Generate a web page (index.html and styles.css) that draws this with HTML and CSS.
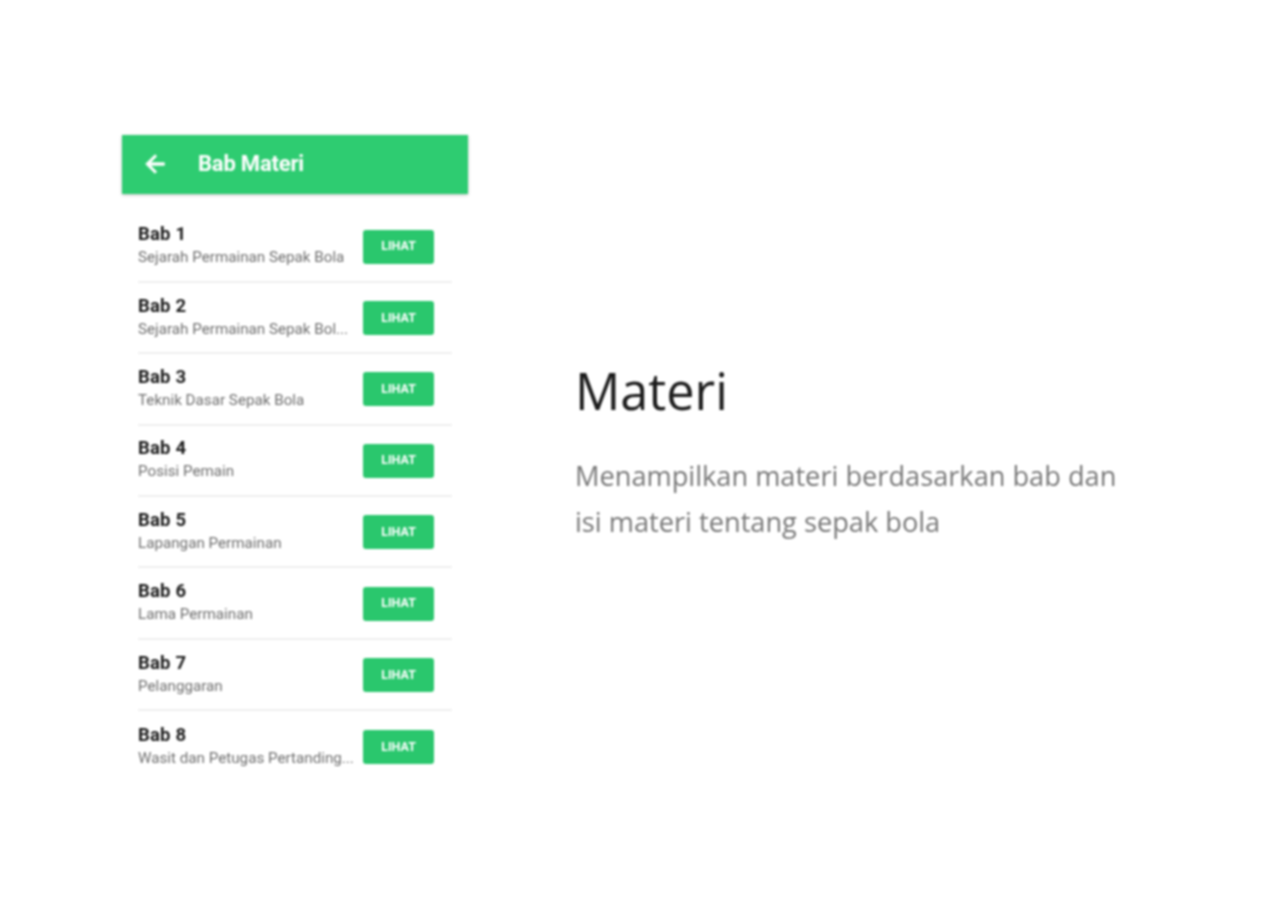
FILE: index.html

```html
<!DOCTYPE html>
<html lang="en">
<head>
<meta charset="UTF-8">
<title>Materi</title>
<link rel="stylesheet" href="styles.css">
</head>
<body>

<div class="page">
    <div class="phone">
        <div class="appbar">
            <svg class="back" viewBox="0 0 24 24" width="28" height="28"><path d="M20 11H7.83l5.59-5.59L12 4l-8 8 8 8 1.41-1.41L7.83 13H20v-2z"/></svg>
            <span class="appbar-title">Bab Materi</span>
        </div>
        <div class="list">
            <div class="row">
                <div class="row-text"><div class="row-title">Bab 1</div><div class="row-sub">Sejarah Permainan Sepak Bola</div></div>
                <button class="see-btn">LIHAT</button>
            </div>
            <div class="row">
                <div class="row-text"><div class="row-title">Bab 2</div><div class="row-sub">Sejarah Permainan Sepak Bol...</div></div>
                <button class="see-btn">LIHAT</button>
            </div>
            <div class="row">
                <div class="row-text"><div class="row-title">Bab 3</div><div class="row-sub">Teknik Dasar Sepak Bola</div></div>
                <button class="see-btn">LIHAT</button>
            </div>
            <div class="row">
                <div class="row-text"><div class="row-title">Bab 4</div><div class="row-sub">Posisi Pemain</div></div>
                <button class="see-btn">LIHAT</button>
            </div>
            <div class="row">
                <div class="row-text"><div class="row-title">Bab 5</div><div class="row-sub">Lapangan Permainan</div></div>
                <button class="see-btn">LIHAT</button>
            </div>
            <div class="row">
                <div class="row-text"><div class="row-title">Bab 6</div><div class="row-sub">Lama Permainan</div></div>
                <button class="see-btn">LIHAT</button>
            </div>
            <div class="row">
                <div class="row-text"><div class="row-title">Bab 7</div><div class="row-sub">Pelanggaran</div></div>
                <button class="see-btn">LIHAT</button>
            </div>
            <div class="row">
                <div class="row-text"><div class="row-title">Bab 8</div><div class="row-sub">Wasit dan Petugas Pertanding...</div></div>
                <button class="see-btn">LIHAT</button>
            </div>
        </div>
    </div>

    <div class="copy">
        <h1>Materi</h1>
        <p>Menampilkan materi berdasarkan bab dan<br>isi materi tentang sepak bola</p>
    </div>
</div>

</body>
</html>
```

FILE: styles.css

```css
body {
    margin: 0;
    padding: 0;
    background: #fff;
    font-family: Roboto, Arial, sans-serif;
}

/* the source picture is a soft, upscaled image */
.page {
    display: flex;
    align-items: flex-start;
    height: 900px;
    padding: 135px 0 0 122px;
    box-sizing: border-box;
    overflow: hidden;
    filter: blur(0.8px);
}

.phone {
    width: 346px;
    flex-shrink: 0;
}

.appbar {
    display: flex;
    align-items: center;
    height: 59px;
    padding: 0 0 2px 19px;
    box-sizing: border-box;
    background: #2ecc71;
    box-shadow: 0 1px 3px rgba(0, 0, 0, 0.25);
    color: #fff;
}

.back {
    fill: #fff;
    stroke: #fff;
    stroke-width: 0.8;
    flex-shrink: 0;
}

.appbar-title {
    margin-left: 29px;
    font-size: 22px;
    font-weight: 700;
    letter-spacing: -0.2px;
}

.list {
    padding: 17.5px 16px 0;
}

.row {
    display: flex;
    align-items: center;
    height: 71.4px;
    box-sizing: border-box;
    padding-top: 1px;
    border-bottom: 2px solid #efefef;
}

.row:last-child {
    border-bottom: none;
}

.row-text {
    width: 217px;
    margin-top: -4px;
}

.row-title {
    margin-bottom: 1px;
    font-size: 18.5px;
    font-weight: 700;
    line-height: 24px;
    letter-spacing: 0.2px;
    color: #1c1c1c;
}

.row-sub {
    font-size: 15.2px;
    line-height: 20px;
    color: #6f6f6f;
    white-space: nowrap;
}

.see-btn {
    width: 71px;
    height: 34px;
    margin-left: 8px;
    padding: 0 0 2px;
    border: none;
    border-radius: 3px;
    background: #2ac76d;
    color: #fff;
    font-family: Roboto, Arial, sans-serif;
    font-size: 12.5px;
    font-weight: 700;
}

.copy {
    margin: 224px 0 0 107px;
}

h1 {
    margin: 0 0 30px;
    font-family: "Open Sans", sans-serif;
    font-size: 50.4px;
    font-weight: 400;
    line-height: 64px;
    color: #1c1c1c;
}

p {
    margin: 0;
    font-family: "Open Sans", sans-serif;
    font-size: 27.2px;
    line-height: 46px;
    color: #777;
    white-space: nowrap;
}
```
